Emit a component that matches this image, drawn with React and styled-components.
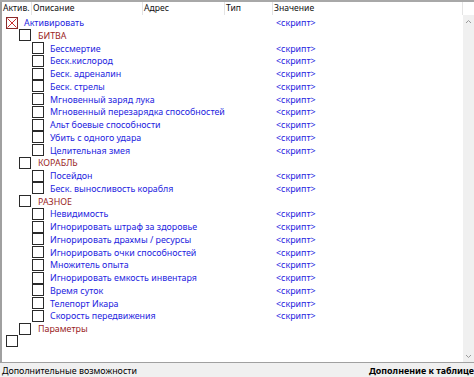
import styled, { createGlobalStyle } from "styled-components";

const Global = createGlobalStyle`
  html, body { margin: 0; padding: 0; background: #fff; }
  body { font-family: "Noto Sans", "Open Sans", sans-serif; overflow: hidden; }
`;

const Window = styled.div`
  width: 474px;
  height: 377px;
  display: flex;
  flex-direction: column;
  border-top: 2px solid #a8a8a8;
  box-sizing: border-box;
  background: #fff;
`;

const Body = styled.div`
  flex: 1;
  display: flex;
  border-left: 2px solid #a0a0a0;
  border-bottom: 1px solid #a0a0a0;
  min-height: 0;
`;

const Table = styled.div`
  flex: 1;
  display: flex;
  flex-direction: column;
`;

const Header = styled.div`
  display: grid;
  grid-template-columns: 30px 111px 82px 48px 1fr;
  height: 13px;
  font-size: 8.6px;
  color: #111;
  line-height: 13px;
`;

const HeadCell = styled.div`
  padding-left: 1px;
  border-right: 1px solid #e4e4e4;
  white-space: nowrap;
  overflow: hidden;
`;

const Rows = styled.div`
  display: flex;
  flex-direction: column;
  padding-top: 1px;
`;

const Row = styled.div`
  display: grid;
  grid-template-columns: 272px 1fr;
  height: 12.76px;
  align-items: center;
  font-size: 8.9px;
`;

const Desc = styled.div`
  display: flex;
  align-items: center;
  padding-left: ${(p) => 4 + p.$level * 13}px;
  white-space: nowrap;
`;

const Box = styled.div`
  position: relative;
  width: 12px;
  height: 12px;
  border: 1px solid #2a2a2a;
  box-sizing: border-box;
  flex: none;
  background: #fff;
  border-color: ${(p) => (p.$on ? "#8a2a2a" : "#2a2a2a")};
`;

const Label = styled.span`
  margin-left: ${(p) => (p.$group ? 7 : 6)}px;
  color: ${(p) => (p.$group ? "#9a1e1e" : "#2424e0")};
`;

const Value = styled.span`
  padding-left: 2px;
  color: #2424e0;
`;

const Scroll = styled.div`
  width: 11px;
  background: #f0f0f0;
  display: flex;
  flex-direction: column;
  justify-content: space-between;
  align-items: center;
  margin-top: 13px;
  padding: 4px 0 3px;
`;

const Status = styled.div`
  height: 14px;
  background: #f0f0f0;
  display: flex;
  justify-content: space-between;
  align-items: center;
  font-size: 8.9px;
  color: #000;
  padding-left: 2px;
`;

const Bold = styled.span`
  font-weight: bold;
`;

const Arrow = ({ up }) => (
  <svg width="7" height="5" viewBox="0 0 7 5">
    <path d={up ? "M1 4 L3.5 1.5 L6 4" : "M1 1 L3.5 3.5 L6 1"} fill="none" stroke="#9a9a9a" strokeWidth="1" />
  </svg>
);

const Cross = () => (
  <svg width="12" height="12" viewBox="0 0 12 12" style={{ position: "absolute", left: -1, top: -1 }}>
    <path d="M1.5 1.5 L10.5 10.5 M10.5 1.5 L1.5 10.5" stroke="#cc3030" strokeWidth="1" />
  </svg>
);

const items = [
  { l: 0, t: "Активировать", s: 1, on: 1 },
  { l: 1, t: "БИТВА", g: 1 },
  { l: 2, t: "Бессмертие", s: 1 },
  { l: 2, t: "Беск.кислород", s: 1 },
  { l: 2, t: "Беск. адреналин", s: 1 },
  { l: 2, t: "Беск. стрелы", s: 1 },
  { l: 2, t: "Мгновенный заряд лука", s: 1 },
  { l: 2, t: "Мгновенный перезарядка способностей", s: 1 },
  { l: 2, t: "Альт боевые способности", s: 1 },
  { l: 2, t: "Убить с одного удара", s: 1 },
  { l: 2, t: "Целительная змея", s: 1 },
  { l: 1, t: "КОРАБЛЬ", g: 1 },
  { l: 2, t: "Посейдон", s: 1 },
  { l: 2, t: "Беск. выносливость корабля", s: 1 },
  { l: 1, t: "РАЗНОЕ", g: 1 },
  { l: 2, t: "Невидимость", s: 1 },
  { l: 2, t: "Игнорировать штраф за здоровье", s: 1 },
  { l: 2, t: "Игнорировать драхмы / ресурсы", s: 1 },
  { l: 2, t: "Игнорировать очки способностей", s: 1 },
  { l: 2, t: "Множитель опыта", s: 1 },
  { l: 2, t: "Игнорировать емкость инвентаря", s: 1 },
  { l: 2, t: "Время суток", s: 1 },
  { l: 2, t: "Телепорт Икара", s: 1 },
  { l: 2, t: "Скорость передвижения", s: 1 },
  { l: 1, t: "Параметры", g: 1 },
  { l: 0, t: "" },
];

export default function App() {
  return (
    <Window>
      <Global />
      <Body>
        <Table>
          <Header>
            <HeadCell>Актив.</HeadCell>
            <HeadCell>Описание</HeadCell>
            <HeadCell>Адрес</HeadCell>
            <HeadCell>Тип</HeadCell>
            <HeadCell>Значение</HeadCell>
          </Header>
          <Rows>
            {items.map((it, i) => (
              <Row key={i}>
                <Desc $level={it.l}>
                  <Box $on={it.on}>{it.on ? <Cross /> : null}</Box>
                  {it.t && <Label $group={it.g}>{it.t}</Label>}
                </Desc>
                <Value>{it.s ? "<скрипт>" : ""}</Value>
              </Row>
            ))}
          </Rows>
        </Table>
        <Scroll>
          <Arrow up />
          <Arrow />
        </Scroll>
      </Body>
      <Status>
        <span>Дополнительные возможности</span>
        <Bold>Дополнение к таблице</Bold>
      </Status>
    </Window>
  );
}
